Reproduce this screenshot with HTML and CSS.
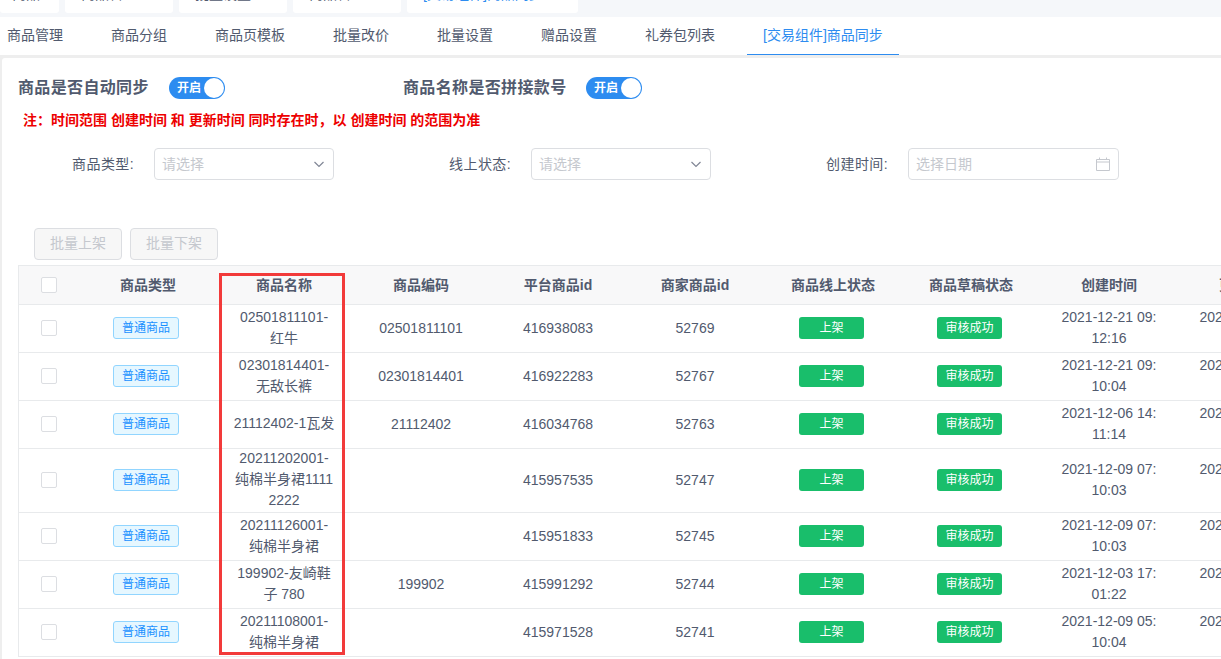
FILE: index.html
```html
<!DOCTYPE html>
<html lang="zh-CN">
<head>
<meta charset="utf-8">
<title>商品同步</title>
<link rel="stylesheet" href="styles.css">
</head>
<body>
<div class="crumbs">
  <span class="crumb c1">商品</span>
  <span class="crumb c2">商品管理</span>
  <span class="crumb c2">批量设置</span>
  <span class="crumb c2">商品管理</span>
  <span class="crumb c3 on">[交易组件]商品同步</span>
</div>
<nav class="tabs">
  <a class="tab first">商品管理</a>
  <a class="tab">商品分组</a>
  <a class="tab">商品页模板</a>
  <a class="tab">批量改价</a>
  <a class="tab">批量设置</a>
  <a class="tab">赠品设置</a>
  <a class="tab">礼券包列表</a>
  <a class="tab active">[交易组件]商品同步</a>
</nav>
<main class="card">
  <div class="switches">
    <div class="sw-item first-sw"><span class="sw-title">商品是否自动同步</span><span class="switch">开启<i class="knob"></i></span></div>
    <div class="sw-item"><span class="sw-title wide">商品名称是否拼接款号</span><span class="switch">开启<i class="knob"></i></span></div>
  </div>
  <p class="note">注：时间范围 创建时间 和 更新时间 同时存在时，以 创建时间 的范围为准</p>
  <div class="filters">
    <label class="f-label">商品类型:</label>
    <div class="select"><span class="ph">请选择</span><svg class="ico" width="12" height="12" viewBox="0 0 12 12"><path d="M1.5 4l4.5 4.500L10.500 4" fill="none" stroke="#808695" stroke-width="1.2"/></svg></div>
    <label class="f-label l2">线上状态:</label>
    <div class="select"><span class="ph">请选择</span><svg class="ico" width="12" height="12" viewBox="0 0 12 12"><path d="M1.5 4l4.5 4.500L10.500 4" fill="none" stroke="#808695" stroke-width="1.2"/></svg></div>
    <label class="f-label l3">创建时间:</label>
    <div class="select date"><span class="ph">选择日期</span><svg class="ico cal" width="14" height="14" viewBox="0 0 14 14"><path d="M.5 2.500h13v11H.5zM.5 5h13M3.500.5v2M10.500.5v2" fill="none" stroke="#c5c8ce"/></svg></div>
  </div>
  <div class="actions">
    <button class="btn" disabled>批量上架</button>
    <button class="btn" disabled>批量下架</button>
  </div>
  <div class="table-wrap">
    <table class="grid">
      <colgroup>
        <col class="w1"><col class="w2"><col class="w3"><col class="w4"><col class="w3"><col class="w4"><col class="w5"><col class="w4"><col class="w5"><col class="w4">
      </colgroup>
      <thead>
        <tr>
          <th><i class="check"></i></th><th>商品类型</th><th>商品名称</th><th>商品编码</th><th>平台商品id</th><th>商家商品id</th><th>商品线上状态</th><th>商品草稿状态</th><th>创建时间</th><th>更新时间</th>
        </tr>
      </thead>
      <tbody>
        <tr>
          <td><i class="check"></i></td><td><span class="tag">普通商品</span></td><td><div class="cell">02501811101-红牛</div></td><td>02501811101</td><td>416938083</td><td>52769</td><td><span class="pill">上架</span></td><td><span class="pill">审核成功</span></td><td><div class="cell">2021-12-21 09:12:16</div></td><td><div class="cell">2021-12-21 09:12:16</div></td>
        </tr>
        <tr>
          <td><i class="check"></i></td><td><span class="tag">普通商品</span></td><td><div class="cell">02301814401-无敌长裤</div></td><td>02301814401</td><td>416922283</td><td>52767</td><td><span class="pill">上架</span></td><td><span class="pill">审核成功</span></td><td><div class="cell">2021-12-21 09:10:04</div></td><td><div class="cell">2021-12-21 09:10:04</div></td>
        </tr>
        <tr>
          <td><i class="check"></i></td><td><span class="tag">普通商品</span></td><td><div class="cell">21112402-1瓦发</div></td><td>21112402</td><td>416034768</td><td>52763</td><td><span class="pill">上架</span></td><td><span class="pill">审核成功</span></td><td><div class="cell">2021-12-06 14:11:14</div></td><td><div class="cell">2021-12-06 14:11:14</div></td>
        </tr>
        <tr>
          <td><i class="check"></i></td><td><span class="tag">普通商品</span></td><td><div class="cell">20211202001-纯棉半身裙11112222</div></td><td></td><td>415957535</td><td>52747</td><td><span class="pill">上架</span></td><td><span class="pill">审核成功</span></td><td><div class="cell">2021-12-09 07:10:03</div></td><td><div class="cell">2021-12-09 07:10:03</div></td>
        </tr>
        <tr>
          <td><i class="check"></i></td><td><span class="tag">普通商品</span></td><td><div class="cell">20211126001-纯棉半身裙</div></td><td></td><td>415951833</td><td>52745</td><td><span class="pill">上架</span></td><td><span class="pill">审核成功</span></td><td><div class="cell">2021-12-09 07:10:03</div></td><td><div class="cell">2021-12-09 07:10:03</div></td>
        </tr>
        <tr>
          <td><i class="check"></i></td><td><span class="tag">普通商品</span></td><td><div class="cell">199902-友崎鞋子 780</div></td><td>199902</td><td>415991292</td><td>52744</td><td><span class="pill">上架</span></td><td><span class="pill">审核成功</span></td><td><div class="cell">2021-12-03 17:01:22</div></td><td><div class="cell">2021-12-03 17:01:22</div></td>
        </tr>
        <tr>
          <td><i class="check"></i></td><td><span class="tag">普通商品</span></td><td><div class="cell">20211108001-纯棉半身裙</div></td><td></td><td>415971528</td><td>52741</td><td><span class="pill">上架</span></td><td><span class="pill">审核成功</span></td><td><div class="cell">2021-12-09 05:10:04</div></td><td><div class="cell">2021-12-09 05:10:04</div></td>
        </tr>
      </tbody>
    </table>
    <div class="highlight"></div>
  </div>
</main>
</body>
</html>
```

FILE: styles.css
```css
* { box-sizing: border-box; }
html, body { height: 100%; }
body {
  margin: 0;
  overflow: hidden;
  background: #eeeeee;
  color: #515a6e;
  font-family: "Liberation Sans", "Noto Sans CJK SC", sans-serif;
  font-size: 14px;
}
.crumbs {
  display: flex;
  gap: 6px;
  height: 17px;
  background: #f5f7fa;
  align-items: flex-start;
}
.crumb {
  display: flex;
  align-items: flex-end;
  height: 13px;
  line-height: 20px;
  padding: 0 0 9px 16px;
  overflow: hidden;
  background: #fff;
  border-radius: 0 0 3px 3px;
  color: #515a6e;
}
.c1 { width: 59px; padding-left: 12px; }
.c2 { width: 108px; }
.c3 { width: 171px; }
.crumb.on { color: #2d8cf0; }
.tabs {
  display: flex;
  height: 38px;
  background: #fff;
}
.tab {
  padding: 0 16px;
  margin-right: 16px;
  line-height: 36px;
  height: 38px;
  color: #515a6e;
  white-space: nowrap;
}
.tab.first { padding-left: 7px; }
.tab.active {
  color: #2d8cf0;
  border-bottom: 1px solid #2d8cf0;
  margin-right: 0;
}
.card {
  margin: 3px 0 0 2px;
  padding: 19px 0 0 16px;
  background: #fff;
  height: 601px;
  border-radius: 3px 0 0 0;
  overflow: hidden;
}
.switches { display: flex; height: 22px; align-items: center; }
.sw-item { display: flex; align-items: center; }
.first-sw { width: 385px; }
.sw-title {
  font-size: 16px;
  font-weight: 700;
  letter-spacing: .35px;
  line-height: 20px;
  width: 151px;
  margin-bottom: 1px;
}
.sw-title.wide { width: 183px; }
.switch {
  display: block;
  position: relative;
  width: 56px;
  height: 22px;
  line-height: 22px;
  padding-left: 8px;
  border-radius: 11px;
  background: #2d8cf0;
  color: #fff;
  font-size: 12px;
  font-weight: 700;
}
.knob {
  position: absolute;
  right: 1px;
  top: 1px;
  width: 20px;
  height: 20px;
  border-radius: 50%;
  background: #fff;
}
.note {
  margin: 11px 0 0 5px;
  height: 20px;
  line-height: 20px;
  color: #ed0000;
  font-weight: 700;
  font-size: 14px;
}
.filters {
  display: flex;
  align-items: center;
  margin-top: 18px;
  height: 32px;
}
.f-label {
  width: 136px;
  margin-bottom: 2px;
  text-align: right;
  padding-right: 20px;
  letter-spacing: .4px;
  white-space: nowrap;
}
.f-label.l2 { width: 197px; }
.f-label.l3 { width: 197px; }
.select {
  display: flex;
  align-items: center;
  justify-content: space-between;
  width: 180px;
  height: 32px;
  padding: 0 9px 0 7px;
  border: 1px solid #dcdee2;
  border-radius: 4px;
  color: #c5c8ce;
  background: #fff;
}
.ph { margin-bottom: 2px; }
.date { width: 211px; }
.ico { margin-right: -1px; }
.actions { display: flex; gap: 8px; margin: 48px 0 0 16px; }
.btn {
  width: 88px;
  height: 32px;
  background: #f7f7f7;
  border: 1px solid #dcdee2;
  border-radius: 4px;
  color: #c5c8ce;
  font: inherit;
  padding: 0 0 4px;
}
.table-wrap {
  position: relative;
  margin-top: 5px;
  width: 1203px;
  border-top: 1px solid #e8eaec;
  border-left: 1px solid #e8eaec;
}
.grid {
  table-layout: fixed;
  border-collapse: separate;
  border-spacing: 0;
  width: 1298px;
  text-align: center;
}
.w1 { width: 60px; }
.w2 { width: 138px; }
.w3 { width: 134px; }
.w4 { width: 140px; }
.w5 { width: 136px; }
th {
  height: 39px;
  background: #f8f8f9;
  font-weight: 700;
  font-size: 14px;
  color: #515a6e;
  border-bottom: 1px solid #e8eaec;
  padding: 0 0 2px;
}
td {
  height: 48px;
  line-height: 21px;
  padding: 0;
  border-bottom: 1px solid #e8eaec;
  vertical-align: middle;
}
.cell {
  width: 102px;
  margin: -1px auto 1px;
  word-break: break-all;
}
.check {
  display: block;
  width: 16px;
  height: 16px;
  margin: -1px auto 1px;
  border: 1px solid #dcdee2;
  border-radius: 2px;
  background: #fff;
}
th .check { margin: 1px auto -1px; }
.tag, .pill {
  display: inline-block;
  vertical-align: middle;
  height: 22px;
  width: 66px;
  margin: -1px 4px 1px 0;
  line-height: 20px;
  font-size: 12px;
  border-radius: 3px;
}
.tag {
  background: #e6f7ff;
  border: 1px solid #91d5ff;
  color: #1890ff;
}
.pill {
  width: 65px;
  margin-right: 3px;
  line-height: 22px;
  background: #19be6b;
  color: #fff;
}
.highlight {
  position: absolute;
  left: 200px;
  top: 7px;
  width: 126px;
  height: 382px;
  border: 3px solid #f23a3a;
  pointer-events: none;
}
```
